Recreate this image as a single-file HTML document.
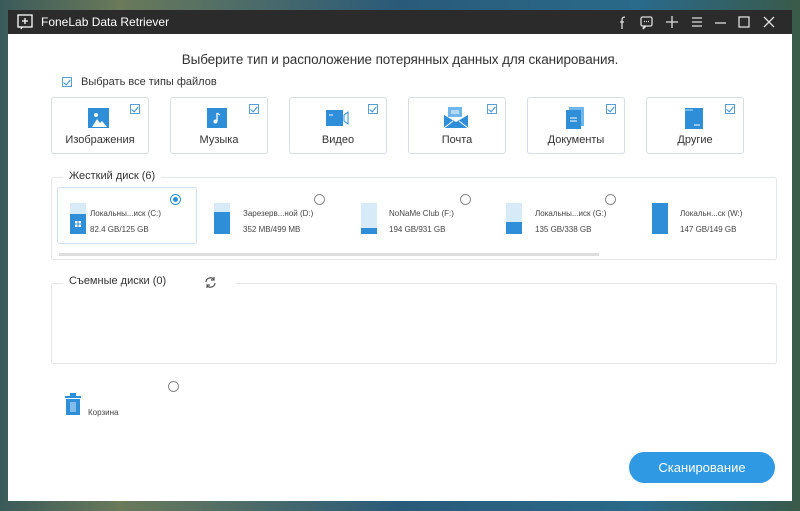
<!DOCTYPE html>
<html><head><meta charset="utf-8"><style>
*{margin:0;padding:0;box-sizing:border-box}
body{width:800px;height:511px;overflow:hidden;position:relative;font-family:"Liberation Sans",sans-serif;background:linear-gradient(90deg,#3a5a5a 0%,#6a7a5a 15%,#2a5a7a 50%,#2a6a8a 80%,#3a5a4a 100%)}
.win{position:absolute;left:8px;top:10px;width:784px;height:491px;background:#fff}
.tb{height:24px;background:#2b2b2b;color:#fff;font-size:12px;position:relative}
.tb .t{position:absolute;left:33px;top:5px}
.a{position:absolute}
.h{position:absolute;left:0;width:784px;text-align:center;top:42px;font-size:13.5px;color:#333;letter-spacing:-.1px}
.cb{position:absolute;width:10px;height:10px;border:1px solid #5a9fd4;background:#fff}
.cb:after{content:"";position:absolute;left:2px;top:0px;width:3px;height:6px;border:solid #2f8ed8;border-width:0 1.5px 1.5px 0;transform:rotate(40deg)}
.card{position:absolute;top:87px;width:98px;height:57px;border:1px solid #d5dde5;border-radius:3px}
.card .cb{right:8px;top:6px}
.card .l{position:absolute;left:0;right:0;top:36px;text-align:center;font-size:11px;color:#333}
.card svg{position:absolute;left:33px;top:8px}
.grp{position:absolute;border:1px solid #e2e6ea;border-radius:3px}
.lab{position:absolute;background:#fff;padding:0 6px;font-size:11px;color:#333}
.rd{position:absolute;width:11px;height:11px;border:1px solid #888;border-radius:50%;background:#fff}
.bar{position:absolute;width:16px;height:31px;background:#d6eaf8}
.bar i{position:absolute;left:0;right:0;bottom:0;background:#2f8ed8}
.dt{position:absolute;font-size:8px;color:#444;line-height:16px}
</style></head><body>
<div class="win">
<div class="tb">
<svg class="a" style="left:9px;top:4px" width="16" height="16" viewBox="0 0 16 16"><rect x="1" y="1" width="14" height="12" fill="none" stroke="#fff" stroke-width="1.3"/><path d="M8 4v6M5 7h6M5 13l-1 2" stroke="#fff" stroke-width="1.3"/></svg>
<span class="t">FoneLab Data Retriever</span>
<svg class="a" style="left:606px;top:4px" width="170" height="16" viewBox="0 0 170 16" fill="none" stroke="#ddd" stroke-width="1.3"><path d="M8 15V6q0-3 3-3M6 8h4"/><rect x="27" y="3" width="11" height="9" rx="1.5"/><path d="M30 12l-1 3 3-3M30 7.5h1M32 7.5h1M34 7.5h1"/><path d="M58 2v12M52 8h12"/><path d="M78 4h10M78 8h10M78 12h10"/><path d="M101 9h11"/><rect x="125" y="3" width="10" height="10"/><path d="M150 3l10 10M160 3l-10 10"/></svg>
</div>
<div class="h">Выберите тип и расположение потерянных данных для сканирования.</div>
<div class="cb" style="left:54px;top:67px"></div>
<div class="a" style="left:73px;top:66px;font-size:11px;color:#333">Выбрать все типы файлов</div>
<div class="card" style="left:43px"><svg width="30" height="24" viewBox="0 0 30 24"><rect x="3" y="2" width="21" height="20" fill="#2f8ed8"/><path d="M7 21l5-8 3 4 2-2 5 6z" fill="#fff"/><circle cx="11" cy="9" r="2" fill="#fff"/></svg><div class="cb"></div><div class="l">Изображения</div></div>
<div class="card" style="left:162px"><svg width="30" height="24" viewBox="0 0 30 24"><rect x="3" y="2" width="20" height="20" fill="#2f8ed8"/><path d="M13 7v8" stroke="#fff" stroke-width="1.3"/><circle cx="11.5" cy="15.5" r="2" fill="#fff"/><path d="M13 7l3 2" stroke="#fff" stroke-width="1.3"/></svg><div class="cb"></div><div class="l">Музыка</div></div>
<div class="card" style="left:281px"><svg width="30" height="24" viewBox="0 0 30 24"><rect x="3" y="4" width="17" height="16" fill="#2f8ed8"/><path d="M21 9l4-3v12l-4-3z" fill="none" stroke="#2f8ed8"/><path d="M6 9h4" stroke="#fff"/></svg><div class="cb"></div><div class="l">Видео</div></div>
<div class="card" style="left:400px"><svg width="30" height="24" viewBox="0 0 30 24"><rect x="6" y="1" width="14" height="10" fill="#6fb6ea"/><path d="M2 9l12 7 12-7v13H2z" fill="#2f8ed8"/><path d="M2 22l9-7M26 22l-9-7" stroke="#fff"/><path d="M9 5h8M9 7h8" stroke="#fff"/></svg><div class="cb"></div><div class="l">Почта</div></div>
<div class="card" style="left:519px"><svg width="30" height="24" viewBox="0 0 30 24"><rect x="8" y="1" width="15" height="19" fill="#6fb6ea"/><rect x="5" y="4" width="15" height="19" fill="#2f8ed8"/><path d="M9 12h7M9 15h7" stroke="#fff"/></svg><div class="cb"></div><div class="l">Документы</div></div>
<div class="card" style="left:638px"><svg width="30" height="24" viewBox="0 0 30 24"><rect x="5" y="2" width="18" height="21" fill="#2f8ed8"/><path d="M5 4h8" stroke="#6fb6ea" stroke-width="2"/><path d="M14 19h6" stroke="#fff"/></svg><div class="cb"></div><div class="l">Другие</div></div>

<div class="grp" style="left:43px;top:167px;width:726px;height:83px"></div>
<div class="lab" style="left:55px;top:160px">Жесткий диск (6)</div>
<div class="a" style="left:49px;top:177px;width:140px;height:57px;border:1px solid #cfe0ee;border-radius:3px"></div>
<div class="a" style="left:51px;top:243px;width:540px;height:3px;background:#ddd"></div>
<div class="rd" style="left:162px;top:184px;border-color:#2f8ed8"><div style="position:absolute;left:2px;top:2px;width:5px;height:5px;border-radius:50%;background:#2f8ed8"></div></div>
<div class="bar" style="left:62px;top:193px"><i style="height:20px"></i><svg style="position:absolute;left:5px;top:18px" width="6" height="6"><rect x="0" y="0" width="2.5" height="2.5" fill="#fff"/><rect x="3.5" y="0" width="2.5" height="2.5" fill="#fff"/><rect x="0" y="3.5" width="2.5" height="2.5" fill="#fff"/><rect x="3.5" y="3.5" width="2.5" height="2.5" fill="#fff"/></svg></div>
<div class="dt" style="left:82px;top:196px">Локальны...иск (C:)<br>82.4 GB/125 GB</div>
<div class="rd" style="left:306px;top:184px"></div>
<div class="bar" style="left:206px;top:193px"><i style="height:22px"></i></div>
<div class="dt" style="left:235px;top:196px">Зарезерв...ной (D:)<br>352 MB/499 MB</div>
<div class="rd" style="left:452px;top:184px"></div>
<div class="bar" style="left:353px;top:193px"><i style="height:6px"></i></div>
<div class="dt" style="left:381px;top:196px">NoNaMe Club (F:)<br>194 GB/931 GB</div>
<div class="rd" style="left:597px;top:184px"></div>
<div class="bar" style="left:498px;top:193px"><i style="height:12px"></i></div>
<div class="dt" style="left:527px;top:196px">Локальны...иск (G:)<br>135 GB/338 GB</div>
<div class="bar" style="left:644px;top:193px"><i style="height:31px"></i></div>
<div class="dt" style="left:672px;top:196px">Локальн...ск (W:)<br>147 GB/149 GB</div>

<div class="grp" style="left:43px;top:273px;width:726px;height:81px"></div>
<div class="lab" style="left:55px;top:265px;padding-right:70px">Съемные диски (0)</div>
<svg class="a" style="left:196px;top:266px" width="13" height="13" viewBox="0 0 13 13" fill="none" stroke="#555" stroke-width="1.2"><path d="M2 6a4.5 4.5 0 0 1 8-2.5M11 7a4.5 4.5 0 0 1-8 2.5M10 1v3H7M3 12V9h3"/></svg>

<div class="rd" style="left:160px;top:371px"></div>
<svg class="a" style="left:56px;top:383px" width="18" height="22" viewBox="0 0 18 22"><rect x="1" y="3" width="16" height="2" fill="#2f8ed8"/><rect x="6" y="0" width="6" height="3" fill="#2f8ed8"/><rect x="2" y="6" width="14" height="16" fill="#2f8ed8"/><path d="M7 9v10M9 9v10M11 9v10" stroke="#fff" stroke-width=".8"/></svg>
<div class="a" style="left:80px;top:398px;font-size:8px;color:#444">Корзина</div>
<div class="a" style="left:621px;top:442px;width:146px;height:31px;border-radius:16px;background:#2f9ae3;color:#fff;font-size:13px;text-align:center;line-height:31px">Сканирование</div>
</div>
</body></html>
